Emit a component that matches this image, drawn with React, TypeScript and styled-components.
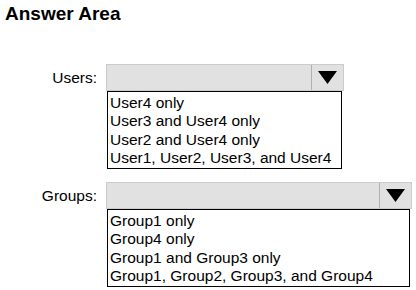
import React from 'react';
import styled, { createGlobalStyle } from 'styled-components';

const GlobalStyle = createGlobalStyle`
  body {
    margin: 0;
    background: #ffffff;
    font-family: "Liberation Sans", Arial, sans-serif;
    color: #000000;
  }
`;

const Page = styled.div`
  padding: 3px 0 0 5px;
`;

const Title = styled.h1`
  margin: 0;
  font-size: 19px;
  font-weight: bold;
  line-height: 22px;
`;

const Form = styled.div`
  display: flex;
  flex-direction: column;
  gap: 13px;
  margin-top: 39px;
`;

const Row = styled.div`
  display: flex;
  align-items: flex-start;
`;

const Label = styled.div`
  width: 92px;
  margin-right: 9px;
  text-align: right;
  font-size: 15.5px;
  line-height: 27px;
`;

const Dropdown = styled.div<{ $width: number }>`
  display: flex;
  flex-direction: column;
  width: ${({ $width }) => $width}px;
`;

const Select = styled.div`
  display: flex;
  height: 27px;
  box-sizing: border-box;
  border: 1px solid #cbcbcb;
  background: #e1e1e1;
`;

const SelectValue = styled.div`
  flex: 1;
`;

const ArrowButton = styled.div`
  width: 31px;
  display: flex;
  align-items: center;
  justify-content: center;
  border-left: 1px solid #b0b0b0;
`;

const List = styled.ul`
  list-style: none;
  margin: 0 2px 0 1px;
  padding: 2px 2px 1px;
  border: 1px solid #000000;
  font-size: 15.5px;
  line-height: 18.3px;
  white-space: nowrap;
`;

const Option = styled.li`
  margin: 0;
`;

const Arrow = () => (
  <svg width="19" height="13" viewBox="0 0 19 13">
    <polygon points="0,0 19,0 9.5,13" fill="#000" />
  </svg>
);

interface FieldProps {
  label: string;
  width: number;
  options: string[];
}

const Field: React.FC<FieldProps> = ({ label, width, options }) => (
  <Row>
    <Label>{label}</Label>
    <Dropdown $width={width}>
      <Select>
        <SelectValue />
        <ArrowButton>
          <Arrow />
        </ArrowButton>
      </Select>
      <List>
        {options.map((o) => (
          <Option key={o}>{o}</Option>
        ))}
      </List>
    </Dropdown>
  </Row>
);

const App: React.FC = () => (
  <Page>
    <GlobalStyle />
    <Title>Answer Area</Title>
    <Form>
      <Field
        label="Users:"
        width={238}
        options={[
          'User4 only',
          'User3 and User4 only',
          'User2 and User4 only',
          'User1, User2, User3, and User4',
        ]}
      />
      <Field
        label="Groups:"
        width={306}
        options={[
          'Group1 only',
          'Group4 only',
          'Group1 and Group3 only',
          'Group1, Group2, Group3, and Group4',
        ]}
      />
    </Form>
  </Page>
);

export default App;
